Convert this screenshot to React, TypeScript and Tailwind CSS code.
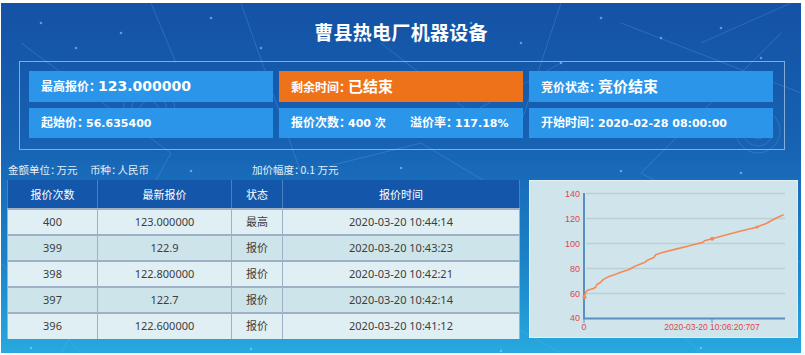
import React from "react";

const rows = [
  ["400", "123.000000", "最高", "2020-03-20 10:44:14"],
  ["399", "122.9", "报价", "2020-03-20 10:43:23"],
  ["398", "122.800000", "报价", "2020-03-20 10:42:21"],
  ["397", "122.7", "报价", "2020-03-20 10:42:14"],
  ["396", "122.600000", "报价", "2020-03-20 10:41:12"],
];

const pts: [number, number][] = [
  [55, 117.3], [56.6, 112.9], [58, 110.5], [64.4, 108.5], [66.7, 107.2], [67.8, 104.5],
  [71.1, 102.8], [74.5, 99.4], [80.2, 96.4], [88, 93.7], [93, 91.7], [99.7, 89.7],
  [106.5, 86], [116.6, 81.9], [118.3, 80.2], [125, 77.5], [126.7, 74.8], [133.4, 72.5],
  [146.9, 69.1], [160.4, 65.8], [173.8, 62.4], [175.5, 60.7], [183.2, 58.7], [194, 55.7],
  [210.9, 51.3], [227.7, 47.2], [231.7, 45.6], [237.8, 43.2], [241.2, 41.2], [247.9, 37.8],
  [254.6, 34.8],
];

function BgDecor() {
  const lines: [number, number, number, number][] = [
    [150, 0, 175, 60], [20, 40, 170, 150], [170, 150, 60, 350], [240, 0, 300, 170],
    [560, 0, 520, 120], [620, 20, 800, 90], [700, 40, 790, 0], [780, 30, 640, 170],
    [640, 170, 800, 260], [420, 140, 520, 200], [300, 170, 420, 140], [470, 300, 560, 350],
    [560, 220, 700, 350], [0, 260, 80, 350], [380, 40, 470, 110], [470, 110, 560, 60],
  ];
  const dots: [number, number][] = [
    [40, 20], [75, 45], [120, 30], [210, 15], [260, 45], [330, 25], [470, 20], [520, 40],
    [560, 60], [600, 15], [660, 35], [720, 25], [760, 55], [100, 165], [190, 168], [400, 165],
    [620, 168], [740, 170], [30, 345], [250, 346], [500, 348], [700, 345], [780, 300],
  ];
  return (
    <svg className="absolute inset-0" width="800" height="350" viewBox="0 0 800 350">
      {lines.map((l, i) => (
        <line key={i} x1={l[0]} y1={l[1]} x2={l[2]} y2={l[3]} stroke="#7cc3ff" strokeOpacity="0.22" strokeWidth="1" />
      ))}
      {dots.map((d, i) => (
        <circle key={i} cx={d[0]} cy={d[1]} r="1.3" fill="#9fd6ff" fillOpacity="0.55" />
      ))}
      <g fill="none" stroke="#8fd0ff" strokeOpacity="0.18">
        <circle cx="148" cy="108" r="10" />
        <circle cx="148" cy="108" r="18" />
        <circle cx="148" cy="108" r="26" />
        <circle cx="757" cy="128" r="8" />
        <circle cx="757" cy="128" r="15" />
        <circle cx="757" cy="128" r="22" />
      </g>
    </svg>
  );
}

function Label({ text }: { text: string }) {
  return (
    <span className="text-[12px] font-bold text-white whitespace-nowrap">
      {text}
      <span className="tracking-[-3px]">：</span>
    </span>
  );
}

function NumVal({ children, big }: { children: React.ReactNode; big?: boolean }) {
  return (
    <span
      className={
        "font-['DejaVu_Sans','Noto_Sans_CJK_SC',sans-serif] font-bold text-white whitespace-nowrap " +
        (big ? "text-[14px]" : "text-[11px]")
      }
    >
      {children}
    </span>
  );
}

function CjkVal({ children }: { children: React.ReactNode }) {
  return <span className="text-[15px] font-bold text-white">{children}</span>;
}

function Cell({ children, orange }: { children: React.ReactNode; orange?: boolean }) {
  return (
    <div className={"flex items-center pl-[12px] " + (orange ? "bg-[#ee7219]" : "bg-[#2b95e9]")}>
      <div className="flex items-baseline">{children}</div>
    </div>
  );
}

function Chart() {
  const path = pts.map((p, i) => (i === 0 ? "M" : "L") + p[0] + " " + p[1]).join(" ");
  const grid = [
    { v: "140", y: 13.5 },
    { v: "120", y: 38.5 },
    { v: "100", y: 63.5 },
    { v: "80", y: 88.5 },
    { v: "60", y: 113.5 },
  ];
  return (
    <svg width="267" height="156" viewBox="1 1 267 156" className="block">
      {grid.map((g) => (
        <line key={g.v} x1="57" x2="256" y1={g.y} y2={g.y} stroke="#bccfd5" strokeWidth="1.5" />
      ))}
      {[...grid, { v: "40", y: 138 }].map((g) => (
        <text
          key={"t" + g.v}
          x="51"
          y={g.y + 3}
          textAnchor="end"
          fontSize="9"
          fill="#e8414a"
          fontFamily="Liberation Sans, Arial, sans-serif"
        >
          {g.v}
        </text>
      ))}
      <line x1="55" x2="55" y1="13" y2="139" stroke="#5a8fc2" strokeWidth="2" />
      <line x1="54" x2="256" y1="138.5" y2="138.5" stroke="#5a8fc2" strokeWidth="2" />
      <line x1="55" x2="55" y1="138" y2="143" stroke="#5a8fc2" strokeWidth="1" />
      <line x1="183" x2="183" y1="138" y2="143" stroke="#5a8fc2" strokeWidth="1" />
      <text x="55" y="150" textAnchor="middle" fontSize="9" fill="#e8414a" fontFamily="Liberation Sans, Arial, sans-serif">
        0
      </text>
      <text x="183" y="150" textAnchor="middle" fontSize="8.5" fill="#e8414a" fontFamily="Liberation Sans, Arial, sans-serif">
        2020-03-20 10:06:20:707
      </text>
      <path d={path} fill="none" stroke="#f58a55" strokeWidth="1.6" strokeLinejoin="round" />
      <circle cx="55.5" cy="117.3" r="2" fill="#f58a55" />
      <circle cx="183.2" cy="58.7" r="2" fill="#f58a55" />
      <circle cx="228" cy="47" r="1.6" fill="#f58a55" />
    </svg>
  );
}

export default function App() {
  return (
    <div className="w-[805px] h-[355px] bg-white">
      <div className="relative ml-[1px] mt-[3px] w-[800px] h-[350px] overflow-hidden bg-[linear-gradient(180deg,#1452a5_0%,#1762b3_40%,#1c84c8_75%,#27a9df_100%)] font-['Noto_Sans_CJK_SC',sans-serif]">
        <BgDecor />
        <div className="relative flex flex-col">
          <div className="h-[58px] flex items-center justify-center text-white text-[19px] font-bold tracking-[0.3px]">
            曹县热电厂机器设备
          </div>

          <div className="ml-[18px] w-[766px] h-[89px] border border-[rgba(190,215,240,0.65)] pl-[9px] pt-[9px]">
            <div className="grid grid-cols-[244px_244px_244px] grid-rows-[31px_30px] gap-x-[6px] gap-y-[6px]">
              <Cell>
                <Label text="最高报价" />
                <NumVal big>123.000000</NumVal>
              </Cell>
              <Cell orange>
                <Label text="剩余时间" />
                <CjkVal>已结束</CjkVal>
              </Cell>
              <Cell>
                <Label text="竞价状态" />
                <CjkVal>竞价结束</CjkVal>
              </Cell>
              <Cell>
                <Label text="起始价" />
                <NumVal>56.635400</NumVal>
              </Cell>
              <Cell>
                <span className="w-[119px] flex items-baseline">
                  <Label text="报价次数" />
                  <NumVal>400 次</NumVal>
                </span>
                <Label text="溢价率" />
                <NumVal>117.18%</NumVal>
              </Cell>
              <Cell>
                <Label text="开始时间" />
                <NumVal>2020-02-28 08:00:00</NumVal>
              </Cell>
            </div>
          </div>

          <div className="mt-[10px] h-[20px] flex items-center pl-[7px] text-[10.5px] text-[#e3eefa]">
            <span className="w-[82px] whitespace-nowrap">
              金额单位<span className="tracking-[-4px]">：</span>万元
            </span>
            <span className="w-[162px] whitespace-nowrap">
              币种<span className="tracking-[-4px]">：</span>人民币
            </span>
            <span className="whitespace-nowrap">
              加价幅度<span className="tracking-[-4px]">：</span>0.1 万元
            </span>
          </div>

          <div className="flex pl-[6px] gap-[9px]">
            <table className="w-[512px] table-fixed border-collapse text-[11px] h-[159px]">
              <colgroup>
                <col className="w-[90px]" />
                <col className="w-[134px]" />
                <col className="w-[51px]" />
                <col className="w-[237px]" />
              </colgroup>
              <thead>
                <tr className="h-[29px] bg-[#1456a9] text-white">
                  {["报价次数", "最新报价", "状态", "报价时间"].map((h) => (
                    <th key={h} className="font-normal border-x border-[#4a7fc0] p-0">
                      {h}
                    </th>
                  ))}
                </tr>
              </thead>
              <tbody>
                {rows.map((r, i) => (
                  <tr
                    key={r[0]}
                    className={"h-[26px] text-[#3d3d3d] " + (i % 2 === 0 ? "bg-[#e0eff4]" : "bg-[#cde4eb]")}
                  >
                    {r.map((c, j) => (
                      <td
                        key={j}
                        className="text-center p-0 border-x border-t-2 border-[#9db0c6] font-['Noto_Sans','Noto_Sans_CJK_SC',sans-serif]"
                      >
                        {c}
                      </td>
                    ))}
                  </tr>
                ))}
              </tbody>
            </table>

            <div className="w-[269px] h-[158px] border border-[#e4eff3] bg-[#cfe5eb]">
              <Chart />
            </div>
          </div>
        </div>
      </div>
    </div>
  );
}
